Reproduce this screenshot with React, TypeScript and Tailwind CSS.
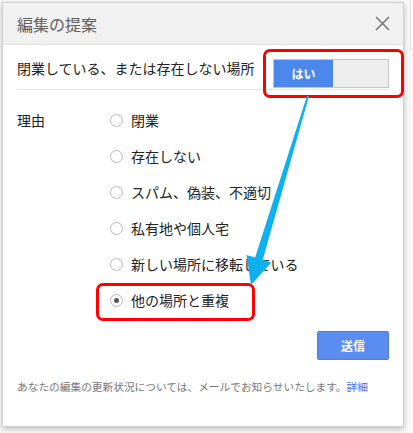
const reasons = [
  "閉業",
  "存在しない",
  "スパム、偽装、不適切",
  "私有地や個人宅",
  "新しい場所に移転している",
  "他の場所と重複",
];

function Radio({ checked }: { checked: boolean }) {
  return (
    <span className="flex h-[13px] w-[13px] items-center justify-center rounded-full border border-[#b9b9b9] bg-white">
      {checked && <span className="h-[5px] w-[5px] rounded-full bg-[#555]" />}
    </span>
  );
}

export default function App() {
  return (
    <div
      className="relative h-[433px] w-[413px] overflow-hidden bg-[#fafafa]"
      style={{ fontFamily: '"Noto Sans CJK JP", "Noto Sans", sans-serif' }}
    >
      {/* card peeking out behind the dialog */}
      <div className="absolute left-[410px] top-[-2px] h-[52px] w-[12px] border border-[#dcdcdc] bg-white" />

      <div className="relative ml-[2px] mt-[2px] flex h-[425px] w-[402px] flex-col border border-[#cfcfcf] bg-white shadow-[0_2px_6px_rgba(0,0,0,0.25)]">
        {/* header */}
        <div className="flex h-[42px] items-center justify-between border-b border-[#e2e2e2] bg-[#f1f1f1] pl-[14px] pr-[13px]">
          <span className="text-[16px] text-[#5f5f5f]">編集の提案</span>
          <svg width="15" height="15" viewBox="0 0 15 15">
            <path d="M1 1 L14 14 M14 1 L1 14" stroke="#777" strokeWidth="1.6" />
          </svg>
        </div>

        <div className="flex flex-col px-[14px]">
          {/* closed toggle */}
          <div className="flex items-start justify-between border-b border-[#e6e6e6] pb-[1px] pt-[14px]">
            <span className="-mt-[1px] text-[14px] leading-[20px] text-[#222]">
              閉業している、または存在しない場所
            </span>
            <div className="flex h-[29px] w-[116px] border border-[#c6c6c6]">
              <div className="flex w-[59px] items-center justify-center bg-[#4c87ec] text-[12px] font-bold text-white">
                はい
              </div>
              <div className="flex-1 bg-[#eeeeee]" />
            </div>
          </div>

          {/* reasons */}
          <div className="flex pt-[12px]">
            <div className="flex h-[36px] w-[93px] items-center text-[14px] text-[#222]">理由</div>
            <div className="flex flex-col">
              {reasons.map((r, i) => (
                <div key={r} className="flex h-[36px] items-center gap-[8px]">
                  <Radio checked={i === reasons.length - 1} />
                  <span className="text-[14px] text-[#222]">{r}</span>
                </div>
              ))}
            </div>
          </div>

          <div className="mt-[13px] flex justify-end">
            <button className="flex h-[29px] w-[72px] items-center justify-center rounded-[2px] border border-[#4d7fe2] bg-[#5b8cef] text-[12px] font-bold text-white">
              送信
            </button>
          </div>

          <p className="mt-[19px] text-[10.7px] leading-[16px] text-[#777]">
            あなたの編集の更新状況については、メールでお知らせいたします。
            <span className="text-[#3f6fd8]">詳細</span>
          </p>
        </div>
      </div>

      {/* annotations */}
      <div className="absolute left-[263px] top-[49px] h-[49px] w-[141px] rounded-[7px] border-[3px] border-[#ff0000]" />
      <div className="absolute left-[96px] top-[283px] h-[38px] w-[159px] rounded-[7px] border-[3px] border-[#ff0000]" />
      <svg className="pointer-events-none absolute left-0 top-0" width="413" height="433">
        <polygon
          points="307,95.7 255.1,257.5 246.5,254.9 251,285 271.3,262.5 262.7,259.9 309,96.3"
          fill="#0fb0ef"
        />
      </svg>
    </div>
  );
}
